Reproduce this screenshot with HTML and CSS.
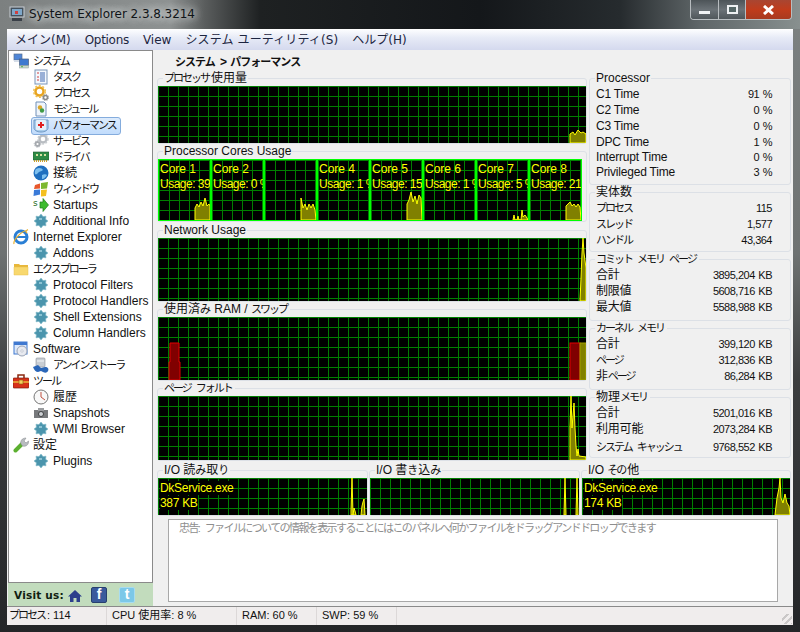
FILE: index.html
```html
<!DOCTYPE html>
<html lang="ja">
<head>
<meta charset="utf-8">
<title>System Explorer</title>
<link rel="stylesheet" href="styles.css">
</head>
<body>
<svg class="sprite" width="0" height="0" aria-hidden="true">
  <symbol id="i-puzzle" viewBox="0 0 16 16"><path fill="#4b95ad" stroke="#7fb8c8" stroke-width=".6" d="M8 1l2 2.600 3-.4-.4 3L15 8l-2.400 1.800.4 3-3-.4L8 15l-2-2.600-3 .4.4-3L1 8l2.400-1.800-.4-3 3 .4z"/><path fill="#8cc3d3" d="M6 5h3v2H6z"/></symbol>
  <symbol id="i-net" viewBox="0 0 16 16"><rect x="1" y="1" width="8" height="6" fill="#4f86d8" stroke="#5a6f90" stroke-width=".7"/><rect x="1" y="7" width="8" height="2" fill="#d5dde8"/><rect x="6.500" y="6" width="9" height="6.500" fill="#3f7ad0" stroke="#4b607f" stroke-width=".7"/><rect x="6.500" y="12.500" width="9" height="2.500" fill="#c9d8c8" stroke="#8a9aa0" stroke-width=".5"/><rect x="8" y="13.200" width="2" height="1" fill="#4fb04f"/></symbol>
  <symbol id="i-task" viewBox="0 0 16 16"><rect x="2" y="1" width="12" height="14" fill="#f4f8fd" stroke="#7a95b8"/><path stroke="#d04040" d="M4 4h2M4 8h2M4 11h2"/><path stroke="#4068b0" d="M7 4h5M7 6h5M7 8h5M7 10h5M7 12h5"/></symbol>
  <symbol id="i-gear" viewBox="0 0 16 16"><circle cx="6.500" cy="6.500" r="4" fill="none" stroke="#e8a420" stroke-width="2.500"/><circle cx="6.500" cy="6.500" r="5.800" fill="none" stroke="#f0c050" stroke-width="1.500" stroke-dasharray="2 1.700"/><circle cx="12.500" cy="12.500" r="2" fill="none" stroke="#8a8a88" stroke-width="1.600"/><circle cx="12.500" cy="12.500" r="3.200" fill="none" stroke="#a0a09c" stroke-width="1" stroke-dasharray="1.300 1.200"/></symbol>
  <symbol id="i-module" viewBox="0 0 16 16"><path fill="#eef4fb" stroke="#7090b8" d="M3 1h8l2 2v12H3z"/><circle cx="7" cy="6.500" r="2.200" fill="#d9a62a"/><circle cx="9" cy="9.500" r="2.200" fill="#3f9a45"/></symbol>
  <symbol id="i-perf" viewBox="0 0 16 16"><path fill="#a9cdec" stroke="#6f98c4" d="M1 3h14v8c0 2-3 4-7 4s-7-2-7-4z"/><rect x="3" y="3" width="10" height="10" rx="1" fill="#e5f0fa"/><path stroke="#e02020" stroke-width="2" d="M8 5v6M5 8h6"/></symbol>
  <symbol id="i-service" viewBox="0 0 16 16"><circle cx="10" cy="6" r="3.500" fill="none" stroke="#b9bdc2" stroke-width="2.400"/><circle cx="10" cy="6" r="5" fill="none" stroke="#c8ccd0" stroke-width="1.400" stroke-dasharray="1.800 1.500"/><circle cx="4.500" cy="11" r="2" fill="none" stroke="#a5a9ae" stroke-width="1.800"/><circle cx="4.500" cy="11" r="3.300" fill="none" stroke="#b5b9be" stroke-width="1" stroke-dasharray="1.300 1.200"/></symbol>
  <symbol id="i-driver" viewBox="0 0 16 16"><rect y="3" width="16" height="8" fill="#2f8a45" stroke="#205a30" stroke-width=".6"/><path stroke="#d8e0a0" stroke-width="2" d="M3 6h2M7 6h2M11 6h2"/><path stroke="#c8a030" stroke-width="2" stroke-dasharray="1 1" d="M1 12h14"/></symbol>
  <symbol id="i-globe" viewBox="0 0 16 16"><circle cx="8" cy="8" r="7.500" fill="#1f6fbf"/><path fill="#7ec0ee" d="M3 4c3-2 6-1 7 1-2 2-4 1-5 3-1 1-2 2-3 1-.5-2 0-4 1-5zM9 10c2-1 4-1 5 0-1 2-3 4-5 4z"/></symbol>
  <symbol id="i-win" viewBox="0 0 16 16"><path fill="#e8582c" d="M2 4l5-1.500v5L1 8z"/><path fill="#7cb82f" d="M8 2l7-1-1 6.500-6 .5z"/><path fill="#3a7ad8" d="M1 9l6-.5v5L.5 15z"/><path fill="#f4c020" d="M8 9l6-.5-1 6.500-5 .5z"/></symbol>
  <symbol id="i-start" viewBox="0 0 16 16"><path fill="#3dbb2e" stroke="#208018" stroke-width=".7" d="M7 5h3V1.500L15.500 8 10 14.500V11H7z"/><text x="0" y="9" class="tiny">s</text></symbol>
  <symbol id="i-ie" viewBox="0 0 16 16"><circle cx="8" cy="8" r="6" fill="none" stroke="#2a7fd5" stroke-width="3"/><path stroke="#2a7fd5" stroke-width="2" d="M4 8h9"/><path fill="none" stroke="#e8b030" stroke-width="1.200" d="M1 15C0 11 8 2 15 1c-3 0-2 2-1 3"/></symbol>
  <symbol id="i-folder" viewBox="0 0 16 16"><path fill="#e8b73a" d="M1 3h5l1 1h8v10H1z"/><path fill="#f8d86e" stroke="#e8c050" stroke-width=".5" d="M1 6h14v8H1z"/></symbol>
  <symbol id="i-software" viewBox="0 0 16 16"><rect x="1" y="1" width="13" height="12" fill="#dce8fa" stroke="#3f78d0"/><rect x="1" y="1" width="13" height="3" fill="#3f78d0"/><circle cx="9" cy="10" r="5" fill="#e8eaf0" stroke="#9aa3b5"/><circle cx="9" cy="10" r="1.200" fill="#fff" stroke="#9aa3b5" stroke-width=".5"/></symbol>
  <symbol id="i-uninst" viewBox="0 0 16 16"><rect x="3" y="1" width="9" height="9" rx="1" fill="#c9ced4" stroke="#8a9097" stroke-width=".6"/><path stroke="#f4f6f8" d="M4 4h7"/><path fill="#2a66b8" d="M0 10l5-2 3 3 4-1c3 0 4 2 3 4s-3 2-5 1l-2-1-3 1c-2 0-4-2-5-5z"/></symbol>
  <symbol id="i-tools" viewBox="0 0 16 16"><path fill="none" stroke="#8a2a10" stroke-width="1.500" d="M5 5V2h6v3"/><rect y="5" width="16" height="10" rx="1" fill="#d8301a" stroke="#7a1a0c" stroke-width=".7"/><path stroke="#f0c040" stroke-width="1.400" d="M0 9h16"/><rect x="6" y="7" width="4" height="4" fill="#f4d060" stroke="#8a5a10" stroke-width=".6"/></symbol>
  <symbol id="i-clock" viewBox="0 0 16 16"><circle cx="8" cy="8" r="7" fill="#f8f8f8" stroke="#777"/><path fill="none" stroke="#c05040" d="M8 3v5l4 3"/></symbol>
  <symbol id="i-camera" viewBox="0 0 16 16"><rect x="1" y="5" width="14" height="8" fill="#77797c"/><rect x="5" y="3" width="6" height="3" fill="#9b9da0"/><circle cx="8" cy="9" r="2.500" fill="#cfd2d6" stroke="#3e4042"/></symbol>
  <symbol id="i-wrench" viewBox="0 0 16 16"><path stroke="#5cb030" stroke-width="4" stroke-linecap="round" d="M2.500 13.500L9 7"/><path fill="#b8bcc0" stroke="#808488" stroke-width=".5" d="M8 7c-1-3 1-6 5-6l-2 3 2 2 2.500-2c.5 4-3 6-6 5z"/></symbol>
  <symbol id="i-home" viewBox="0 0 14 14"><path fill="#2c3f8c" d="M7 1L0 7.500h2V13h3.500V9h3v4H12V7.500h2z"/></symbol>
</svg>

<div class="window">
  <header class="titlebar">
    <svg class="app-icon" viewBox="0 0 16 16"><rect x="1" y="1" width="14" height="10" fill="#44505c" stroke="#c8ced4"/><rect x="3" y="3" width="10" height="6" fill="#7ea7c9"/><path fill="#d04040" d="M6 5h3v3H6z"/><rect x="3" y="12" width="10" height="3" fill="#3a4048"/></svg>
    <span class="app-title">System Explorer 2.3.8.3214</span>
    <div class="caption">
      <span class="cap cap-min"><i></i></span>
      <span class="cap cap-max"><i></i></span>
      <span class="cap cap-close">
        <svg viewBox="0 0 12 10" width="13" height="10"><path stroke="#fff" stroke-width="3" d="M1.500 1l9 8M10.500 1l-9 8"/></svg>
      </span>
    </div>
  </header>

  <div class="client">
    <nav class="menubar">
      <span>メイン(M)</span><span class="m-opt">Options</span><span>View</span><span class="m-sys">システム ユーティリティ(S)</span><span>ヘルプ(H)</span>
    </nav>

    <div class="main">
      <aside class="side">
        <ul class="tree">
          <li class="root"><svg><use href="#i-net"/></svg><span class="ka">システム</span></li>
          <li class="leaf"><svg><use href="#i-task"/></svg><span class="ka">タスク</span></li>
          <li class="leaf"><svg><use href="#i-gear"/></svg><span class="ka">プロセス</span></li>
          <li class="leaf"><svg><use href="#i-module"/></svg><span class="ka">モジュール</span></li>
          <li class="leaf selected"><svg><use href="#i-perf"/></svg><span class="ka">パフォーマンス</span></li>
          <li class="leaf"><svg><use href="#i-service"/></svg><span class="ka">サービス</span></li>
          <li class="leaf"><svg><use href="#i-driver"/></svg><span class="ka">ドライバ</span></li>
          <li class="leaf"><svg><use href="#i-globe"/></svg>接続</li>
          <li class="leaf"><svg><use href="#i-win"/></svg><span class="ka">ウィンドウ</span></li>
          <li class="leaf"><svg><use href="#i-start"/></svg>Startups</li>
          <li class="leaf"><svg><use href="#i-puzzle"/></svg>Additional Info</li>
          <li class="root"><svg><use href="#i-ie"/></svg>Internet Explorer</li>
          <li class="leaf"><svg><use href="#i-puzzle"/></svg>Addons</li>
          <li class="root"><svg><use href="#i-folder"/></svg><span class="ka">エクスプローラ</span></li>
          <li class="leaf"><svg><use href="#i-puzzle"/></svg>Protocol Filters</li>
          <li class="leaf"><svg><use href="#i-puzzle"/></svg>Protocol Handlers</li>
          <li class="leaf"><svg><use href="#i-puzzle"/></svg>Shell Extensions</li>
          <li class="leaf"><svg><use href="#i-puzzle"/></svg>Column Handlers</li>
          <li class="root"><svg><use href="#i-software"/></svg>Software</li>
          <li class="leaf"><svg><use href="#i-uninst"/></svg><span class="ka">アンインストーラ</span></li>
          <li class="root"><svg><use href="#i-tools"/></svg><span class="ka">ツール</span></li>
          <li class="leaf"><svg><use href="#i-clock"/></svg>履歴</li>
          <li class="leaf"><svg><use href="#i-camera"/></svg>Snapshots</li>
          <li class="leaf"><svg><use href="#i-puzzle"/></svg>WMI Browser</li>
          <li class="root"><svg><use href="#i-wrench"/></svg>設定</li>
          <li class="leaf"><svg><use href="#i-puzzle"/></svg>Plugins</li>
        </ul>
        <div class="visit">
          <b>Visit us:</b>
          <svg class="v-home"><use href="#i-home"/></svg>
          <span class="v-fb">f</span>
          <span class="v-tw">t</span>
        </div>
      </aside>

      <section class="panel">
        <h1 class="crumb"><span class="ka">システム</span> &gt; <span class="ka">パフォーマンス</span></h1>
        <div class="charts">
          <div class="chart-col">
            <fieldset class="box">
              <legend><span class="ka">プロセッサ</span>使用量</legend>
              <div class="graph h57">
                <svg class="plot" viewBox="0 0 428 57"><polygon class="fill" points="412,57 412,48 415,46 417,49 420,44 423,47 425,46 428,48 428,57"/></svg>
              </div>
            </fieldset>
            <fieldset class="box">
              <legend>Processor Cores Usage</legend>
              <div class="cores">
                <div class="core"><p>Core 1</p><p>Usage: 39 %</p>
                  <svg class="plot" viewBox="0 0 51 60"><polygon class="fill" points="36,60 36,48 38,44 40,47 42,42 44,46 46,38 48,46 50,44 51,46 51,60"/></svg></div>
                <div class="core"><p>Core 2</p><p>Usage: 0 %</p></div>
                <div class="core">
                  <svg class="plot" viewBox="0 0 51 60"><polygon class="fill" points="36,60 36,38 38,48 40,44 42,50 44,44 46,48 48,44 50,50 51,60"/></svg></div>
                <div class="core"><p>Core 4</p><p>Usage: 1 %</p></div>
                <div class="core"><p>Core 5</p><p>Usage: 15 %</p>
                  <svg class="plot" viewBox="0 0 51 60"><polygon class="fill" points="36,60 36,44 38,40 40,32 42,42 44,36 46,44 48,35 50,38 51,60"/></svg></div>
                <div class="core"><p>Core 6</p><p>Usage: 1 %</p></div>
                <div class="core"><p>Core 7</p><p>Usage: 5 %</p>
                  <svg class="plot" viewBox="0 0 51 60"><polygon class="fill" points="36,60 37,55 38,60 40,60 41,56 42,60 44,60 45,50 46,57 48,55 50,58 51,60"/></svg></div>
                <div class="core"><p>Core 8</p><p>Usage: 21 %</p>
                  <svg class="plot" viewBox="0 0 51 60"><polygon class="fill" points="36,60 36,46 38,44 40,42 42,46 44,44 46,47 48,44 50,47 51,60"/></svg></div>
              </div>
            </fieldset>
            <fieldset class="box gap1">
              <legend>Network Usage</legend>
              <div class="graph h63">
                <svg class="plot" viewBox="0 0 428 63"><polygon class="fill" points="422,63 423,40 424,15 425,0 426,15 428,30 428,63"/></svg>
              </div>
            </fieldset>
            <fieldset class="box">
              <legend>使用済<span class="ka">み</span> RAM / <span class="ka">スワップ</span></legend>
              <div class="graph h63">
                <svg class="plot" viewBox="0 0 428 63"><polygon class="bar-red" points="11,63 11,45 12,45 12,26 21,26 21,45 22,45 22,63"/><rect class="bar-red" x="412" y="26" width="10" height="37"/><rect class="bar-olive" x="422" y="26" width="6" height="37"/></svg>
              </div>
            </fieldset>
            <fieldset class="box">
              <legend><span class="ka">ページ フォルト</span></legend>
              <div class="graph h64">
                <svg class="plot" viewBox="0 0 428 64"><polygon class="fill" points="412,64 412,32 413,0 414,32 415,20 416,7 417,32 418,50 419,60 420,53 421,60 428,61 428,64"/></svg>
              </div>
            </fieldset>
          </div>
          <div class="stat-col">
            <fieldset class="box stats pad5">
              <legend>Processor</legend>
              <div class="row"><span>C1 Time</span><span>91 %</span></div>
              <div class="row"><span>C2 Time</span><span>0 %</span></div>
              <div class="row"><span>C3 Time</span><span>0 %</span></div>
              <div class="row tight"><span>DPC Time</span><span>1 %</span></div>
              <div class="row tight"><span>Interrupt Time</span><span>0 %</span></div>
              <div class="row tight"><span>Privileged Time</span><span>3 %</span></div>
            </fieldset>
            <fieldset class="box stats pad3">
              <legend>実体数</legend>
              <div class="row"><span class="ka">プロセス</span><span>115</span></div>
              <div class="row"><span class="ka">スレッド</span><span>1,577</span></div>
              <div class="row"><span class="ka">ハンドル</span><span>43,364</span></div>
            </fieldset>
            <fieldset class="box stats pad5">
              <legend><span class="ka">コミット メモリ ページ</span></legend>
              <div class="row"><span>合計</span><span>3895,204 KB</span></div>
              <div class="row"><span>制限値</span><span>5608,716 KB</span></div>
              <div class="row"><span>最大値</span><span>5588,988 KB</span></div>
            </fieldset>
            <fieldset class="box stats pad5">
              <legend><span class="ka">カーネル メモリ</span></legend>
              <div class="row"><span>合計</span><span>399,120 KB</span></div>
              <div class="row"><span class="ka">ページ</span><span>312,836 KB</span></div>
              <div class="row"><span>非<span class="ka">ページ</span></span><span>86,284 KB</span></div>
            </fieldset>
            <fieldset class="box stats">
              <legend>物理<span class="ka">メモリ</span></legend>
              <div class="row"><span>合計</span><span>5201,016 KB</span></div>
              <div class="row"><span>利用可能</span><span>2073,284 KB</span></div>
              <div class="row tall"><span class="ka">システム キャッシュ</span><span>9768,552 KB</span></div>
            </fieldset>
          </div>
        </div>

        <div class="io">
          <fieldset class="box">
            <legend>I/O 読<span class="ka">み</span>取<span class="ka">り</span></legend>
            <div class="graph h37">
              <p class="tag">DkService.exe</p><p class="tag">387 KB</p>
              <svg class="plot" viewBox="0 0 209 37"><polygon class="fill" points="193,37 193,33 194,0 195,37 196,30 197,33 198,37"/><polygon class="fill" points="203,37 204,28 205,24 206,21 207,37"/></svg>
            </div>
          </fieldset>
          <fieldset class="box">
            <legend>I/O 書<span class="ka">き</span>込<span class="ka">み</span></legend>
            <div class="graph h37">
              <svg class="plot" viewBox="0 0 209 37"><polygon class="fill" points="194,37 195,0 196,37"/><polygon class="fill" points="206,37 207,0 208,37"/></svg>
            </div>
          </fieldset>
          <fieldset class="box">
            <legend>I/O <span class="ka">その</span>他</legend>
            <div class="graph h37">
              <p class="tag">DkService.exe</p><p class="tag">174 KB</p>
              <svg class="plot" viewBox="0 0 208 37"><polygon class="fill" points="193,37 195,20 197,10 198,0 199,20 201,25 203,16 205,25 207,28 208,37"/></svg>
            </div>
          </fieldset>
        </div>

        <div class="note"><span class="ka">忠告: ファイルについての情報を表示することにはこのパネルへ何かファイルをドラッグアンドドロップできます</span></div>
      </section>
    </div>

    <footer class="status">
      <span class="s1"><span class="ka">プロセス</span>: 114</span>
      <span class="s2">CPU 使用率: 8 %</span>
      <span class="s3">RAM: 60 %</span>
      <span class="s4">SWP: 59 %</span>
      <span class="grip"></span>
    </footer>
  </div>
</div>
</body>
</html>
```

FILE: styles.css
```css
* { box-sizing: border-box; }
html, body { margin: 0; padding: 0; }
body {
  width: 800px;
  height: 632px;
  overflow: hidden;
  font: 12px/14px "Liberation Sans", "Noto Sans CJK JP", sans-serif;
  color: #111;
}
.sprite { display: block; width: 0; height: 0; }
.tiny { font: 9px "DejaVu Sans", sans-serif; fill: #1c6a1c; }

/* kana are narrower than kanji in the original UI font */
.ka { font-size: 11px; letter-spacing: -2px; word-spacing: 4px; padding-right: 2px; }

.window {
  width: 800px;
  height: 632px;
  display: flex;
  flex-direction: column;
  padding: 0 7px 7px;
  background: linear-gradient(180deg, #7d8282 0, #6e7272 40%, #3c3e40 60%, #242628 100%);
}

/* title bar */
.titlebar {
  height: 29px;
  margin: 0 -7px;
  padding: 0 8px 0 9px;
  display: flex;
  align-items: flex-start;
  background: linear-gradient(90deg, #7c8080 0, #8e9292 170px, #5a5d5d 205px, #1e2122 260px, #14171a 480px, #262b2e 620px, #5f6668 700px, #88908f 800px);
}
.app-icon { width: 16px; height: 16px; margin: 6px 4px 0 0; flex: none; }
.app-title {
  margin-top: 6px;
  font: 12px/17px "DejaVu Sans", sans-serif;
  letter-spacing: -.05px;
  color: #101418;
  text-shadow: 0 0 8px #e8ecec, 0 0 8px #e8ecec;
}
.caption { margin-left: auto; display: flex; height: 20px; border: 1px solid #b8bdc0; border-top: 0; border-radius: 0 0 4px 4px; overflow: hidden; }
.cap { display: flex; align-items: center; justify-content: center; }
.cap-min { width: 28px; background: linear-gradient(180deg, #4d5458, #6b7277 50%, #50575b); border-right: 1px solid #b8bdc0; }
.cap-min i { width: 11px; height: 3px; margin-top: 5px; background: #f0f2f4; }
.cap-max { width: 27px; background: linear-gradient(180deg, #4d5458, #6b7277 50%, #50575b); border-right: 1px solid #b8bdc0; }
.cap-max i { width: 11px; height: 9px; border: 2px solid #eef0f2; background: #566; }
.cap-close { width: 45px; background: linear-gradient(180deg, #a84632, #c03c1c 50%, #a83a20); }

/* client */
.client { flex: 1; min-height: 0; display: flex; flex-direction: column; background: #f0f0f0; }
.menubar {
  height: 21px;
  flex: none;
  padding: 2px 0 0 8px;
  display: flex;
  gap: 14px;
  font: 12px/16px "DejaVu Sans", "Noto Sans CJK JP", sans-serif;
  border-top: 1px solid #fff;
  color: #1c2540;
  background: linear-gradient(180deg, #fbfcfe 0, #e6eaf6 40%, #d4d9ee 100%);
}
.m-opt { letter-spacing: -.3px; }
.m-sys { letter-spacing: .13px; }

.main { flex: 1; min-height: 0; display: flex; }

/* tree */
.side { width: 146px; flex: none; padding-left: 1px; display: flex; flex-direction: column; }
.tree {
  flex: 1;
  margin: 0;
  padding: 2px 0 0;
  list-style: none;
  background: #fff;
  border: 1px solid #8a8a8a;
}
.tree li { height: 16px; display: flex; align-items: center; white-space: nowrap; line-height: 16px; }
.tree svg { width: 16px; height: 16px; flex: none; }
.root { padding-left: 4px; }
.root svg { margin-right: 4px; }
.leaf { padding-left: 24px; }
.leaf svg { margin-right: 4px; }
.selected { position: relative; }
.selected span { position: relative; }
.selected::before {
  content: "";
  position: absolute;
  left: 22px;
  top: 0;
  width: 88px;
  height: 16px;
  border: 1px solid #84acdd;
  border-radius: 3px;
  background: linear-gradient(180deg, #dcebfc, #c1dcfc);
}
.selected svg { position: relative; }

.visit {
  height: 23px;
  flex: none;
  display: flex;
  align-items: center;
  padding-left: 6px;
  background: #c2dcbd;
}
.visit b { font: bold 10.500px "DejaVu Sans", sans-serif; color: #102010; width: 54px; letter-spacing: .2px; white-space: nowrap; }
.v-home { width: 14px; height: 14px; margin-top: 2px; }
.v-fb, .v-tw {
  width: 16px;
  height: 16px;
  display: flex;
  align-items: flex-end;
  justify-content: center;
  font: bold 14px/15px "Liberation Sans", sans-serif;
  color: #fff;
  border-radius: 2px;
}
.v-fb { margin-left: 9px; background: #3a5a9c; border: 1px solid #28406f; }
.v-tw { margin-left: 12px; background: #7cc8e8; border: 1px solid #a8dcf0; }

/* right panel */
.panel { flex: 1; min-width: 0; padding-left: 4px; display: flex; flex-direction: column; }
.crumb {
  height: 21px;
  margin: 0;
  padding: 4px 0 0 18px;
  font-size: 12px;
  font-weight: bold;
  line-height: 16px;
  color: #111;
}
.crumb .ka { letter-spacing: -1px; }
.charts { display: flex; gap: 2px; }
.chart-col { width: 430px; flex: none; }
.stat-col { width: 202px; flex: none; }

.box {
  margin: 0;
  padding: 0;
  min-width: 0;
  border: 1px solid #dce0e6;
  border-radius: 3px;
}
.box legend { height: 15px; margin-left: 5px; padding: 0 1px; font-size: 12px; line-height: 15px; color: #111; white-space: nowrap; }
.gap1 { margin-top: 1px; }

.graph, .core {
  position: relative;
  overflow: hidden;
  background-color: #000;
  background-image: linear-gradient(#007f00 1px, transparent 1px), linear-gradient(90deg, #007f00 1px, transparent 1px);
  background-size: 10px 10px;
}
.h37 { height: 37px; }
.h57 { height: 57px; }
.h63 { height: 63px; }
.h64 { height: 64px; }
.plot { position: absolute; left: 0; top: 0; width: 100%; height: 100%; }
.fill { fill: #808000; stroke: #ffff00; stroke-width: 1; }
.bar-red { fill: #800000; stroke: #e00000; stroke-width: 1; }
.bar-olive { fill: #808000; stroke: #a0a000; stroke-width: 1; }

.cores { width: 424px; height: 62px; display: flex; }
.core { width: 53px; flex: none; border: 1px solid #00ff00; padding-top: 1px; }
.core p { margin: 0; padding: 1px 0 0 1px; font-size: 12px; line-height: 14px; height: 15px; color: #ffff00; white-space: nowrap; }
.core p + p { letter-spacing: -.5px; }

.pad3 { padding-bottom: 3px; }
.pad5 { padding-bottom: 5px; }
.row { height: 16px; padding: 1px 18px 0 6px; display: flex; justify-content: space-between; align-items: center; font-size: 12px; line-height: 15px; letter-spacing: -.2px; white-space: nowrap; }
.row > span:last-child { font-size: 11px; letter-spacing: -.5px; word-spacing: 1px; }
.row > .ka:first-child { letter-spacing: -2px; }
.tight { height: 15px; }
.tall { height: 20px; }

.io { margin-top: 2px; display: grid; grid-template-columns: 211px 211px 210px; gap: 1px; }
.tag { position: relative; z-index: 1; width: max-content; margin: 3px 0 0 2px; font-size: 12px; line-height: 14px; letter-spacing: -.3px; color: #ffff00; background: #000; }
.tag + .tag { margin-top: 1px; }

.note {
  height: 83px;
  margin: 3px 15px 0 11px;
  padding: 1px 10px;
  background: #fff;
  border: 1px solid #a8a8a8;
  color: #8e8e8e;
  line-height: 14px;
  white-space: nowrap;
  overflow: hidden;
}
.note .ka { letter-spacing: -1.600px; }

/* status bar */
.status {
  height: 19px;
  flex: none;
  display: flex;
  align-items: center;
  background: #f0eded;
  border-top: 1px solid #8a8a8a;
  font-size: 11px;
  line-height: 17px;
  position: relative;
}
.status > span { height: 100%; padding-left: 5px; border-right: 1px solid #dcd8d8; white-space: nowrap; }
.status .s1 { width: 100px; padding-left: 2px; }
.s2 { width: 130px; }
.s3 { width: 80px; }
.s4 { width: 80px; }
.status .grip {
  position: absolute;
  right: 1px;
  bottom: 1px;
  width: 10px;
  height: 10px;
  padding: 0;
  border: 0;
  background: repeating-linear-gradient(135deg, transparent 0 3px, #b0aeae 3px 5px);
  opacity: .6;
}
```
